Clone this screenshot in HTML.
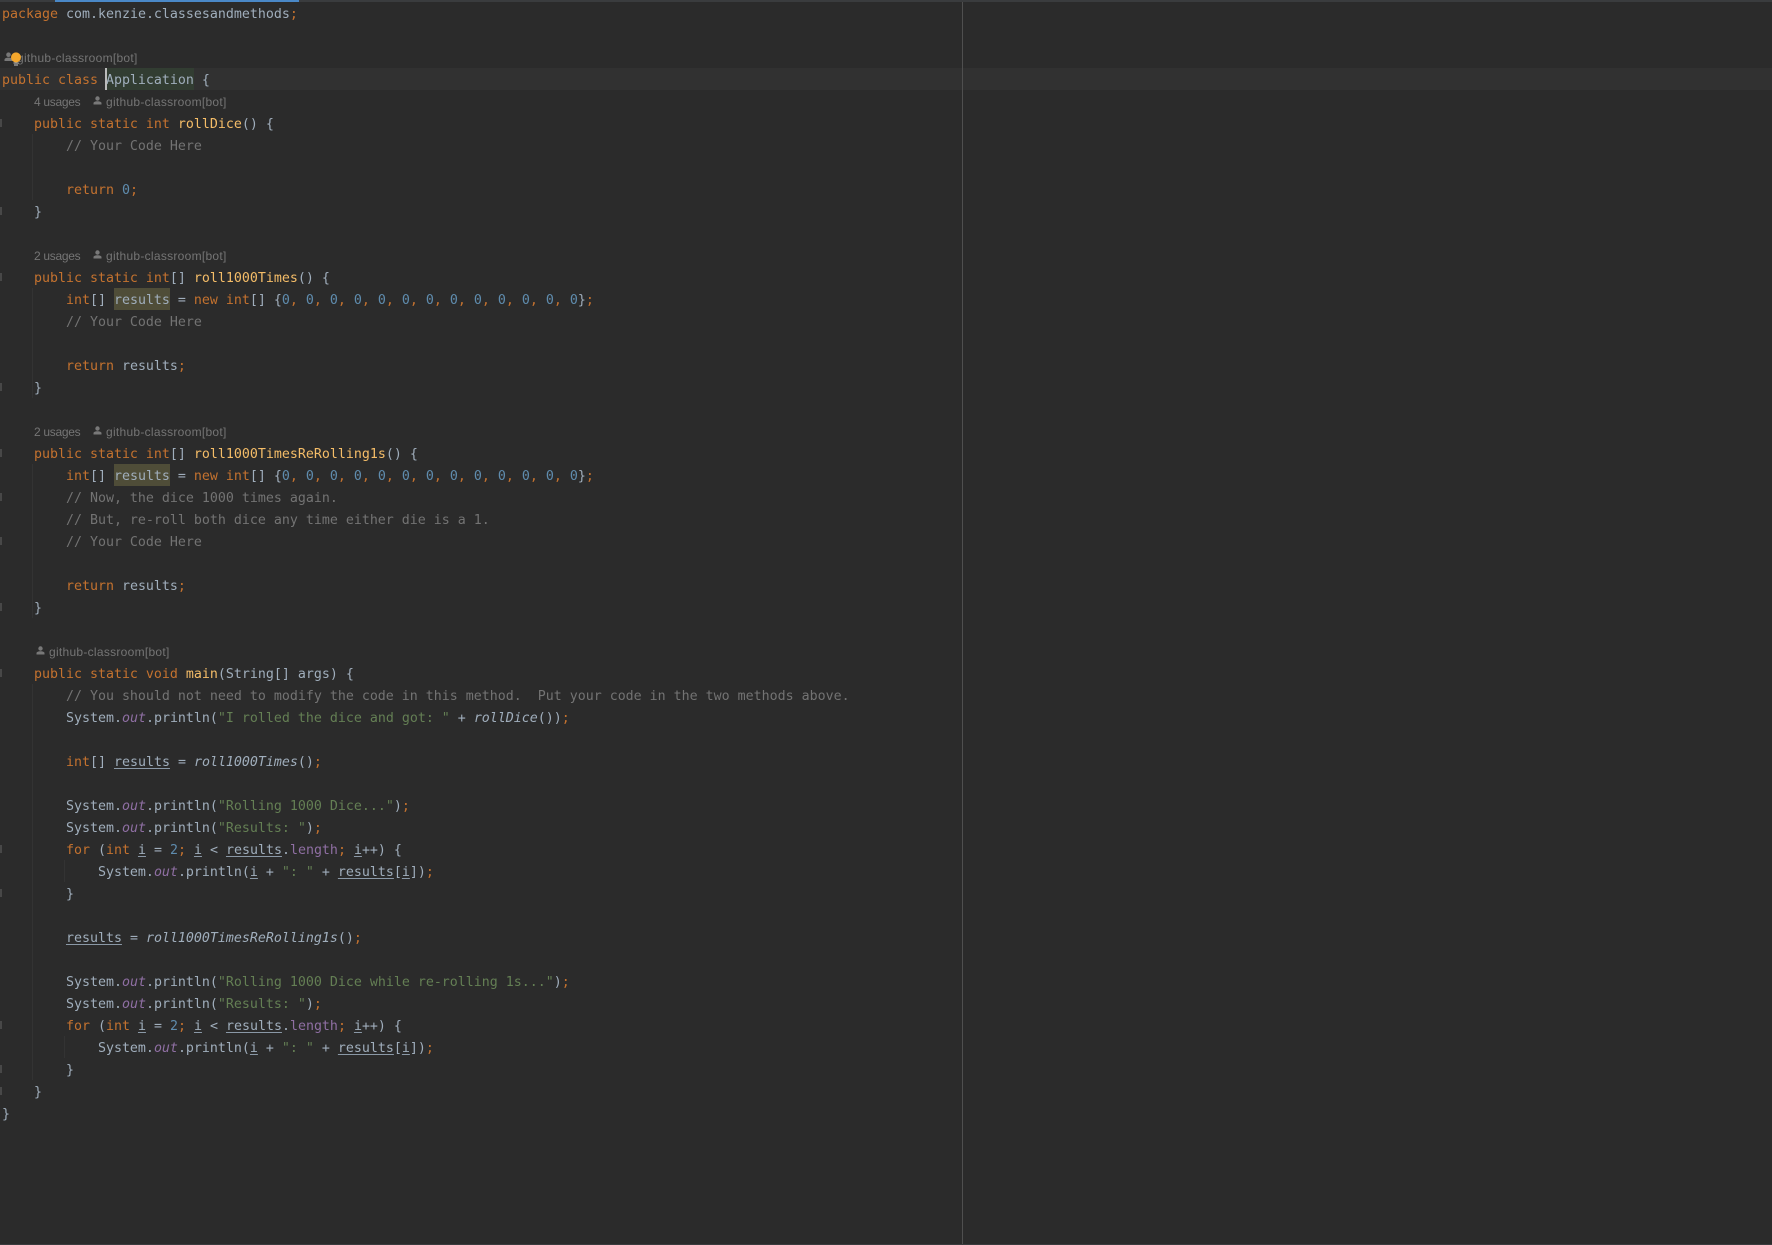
<!DOCTYPE html>
<html><head><meta charset="utf-8">
<style>
html,body{margin:0;padding:0;background:#2b2b2b;}
#p{position:relative;width:1772px;height:1245px;background:#2b2b2b;overflow:hidden;}
.a{position:absolute;}
.l{position:absolute;left:2px;margin-top:2px;height:22px;line-height:22px;white-space:pre;font-family:"DejaVu Sans Mono","Liberation Mono",monospace;font-size:13.29px;color:#a0aebc;}
.h{position:absolute;left:0;height:22px;line-height:22px;white-space:pre;font-family:"Liberation Sans",sans-serif;font-size:12px;color:#757575;}
.us{letter-spacing:-.3px}
.k{color:#c4722f}.m{color:#f5bd68}.c{color:#737373}.s{color:#647f54}.n{color:#5f8cae}.f{color:#8f6fa3}
.o{color:#8f6fa3;font-style:italic}.t{font-style:italic}
.u{text-decoration:underline;text-decoration-color:#8a98a6;text-decoration-thickness:1px;text-underline-offset:2px;text-decoration-skip-ink:none;}
.g{position:absolute;width:1px;background:#333333;}
.fd{position:absolute;left:0;width:2px;height:8px;background:#484848;}
</style></head><body><div id="p">
<div class="a" style="left:0;top:0;width:1772px;height:2px;background:#3a3c3e"></div>
<div class="a" style="left:55px;top:0;width:244px;height:2px;background:#4a88c7"></div>
<div class="a" style="left:0;top:68px;width:1772px;height:22px;background:#313131"></div>
<div class="a" style="left:106px;top:68px;width:88px;height:22px;background:#323d32"></div>
<div class="a" style="left:114px;top:288px;width:56px;height:22px;background:#4f4d38"></div>
<div class="a" style="left:114px;top:464px;width:56px;height:22px;background:#4f4d38"></div>
<div class="a" style="left:962px;top:2px;width:1px;height:1243px;background:#4f4f4f"></div>
<div class="a" style="left:0;top:1244px;width:1772px;height:1px;background:#3a3c3e"></div>

<div class="g" style="left:32px;top:134px;height:66px"></div>
<div class="g" style="left:32px;top:288px;height:110px"></div>
<div class="g" style="left:32px;top:464px;height:154px"></div>
<div class="g" style="left:32px;top:684px;height:396px"></div>
<div class="g" style="left:64px;top:860px;height:22px"></div>
<div class="g" style="left:64px;top:1036px;height:22px"></div>

<div class="fd" style="top:119px"></div><div class="fd" style="top:207px"></div>
<div class="fd" style="top:273px"></div><div class="fd" style="top:383px"></div>
<div class="fd" style="top:449px"></div><div class="fd" style="top:493px"></div><div class="fd" style="top:537px"></div><div class="fd" style="top:603px"></div>
<div class="fd" style="top:669px"></div><div class="fd" style="top:845px"></div><div class="fd" style="top:889px"></div>
<div class="fd" style="top:1021px"></div><div class="fd" style="top:1065px"></div><div class="fd" style="top:1087px"></div>

<div class="l" style="top:2px"><span class="k">package</span> com.kenzie.classesandmethods<span class="k">;</span></div>

<div class="h" style="top:47px;left:17px;letter-spacing:.28px">github-classroom[bot]</div>
<svg class="a" style="left:4px;top:52px" width="10" height="10" viewBox="0 0 10 10"><circle cx="4.5" cy="2.7" r="2.3" fill="#787878"/><path d="M0.5 9V7.6C0.5 6.2 2.5 5.6 4.5 5.6S8.5 6.2 8.5 7.6V9Z" fill="#787878"/></svg>
<svg class="a" style="left:10px;top:52px" width="12" height="16" viewBox="0 0 12 16"><circle cx="6" cy="5.4" r="5" fill="#f4a72c"/><rect x="3.5" y="10.5" width="5" height="1" fill="#c9c9c9"/><rect x="4" y="12.5" width="4" height="1" fill="#c9c9c9"/></svg>

<div class="l" style="top:68px"><span class="k">public class</span> Application {</div>
<div class="a" style="left:105px;top:68px;width:2px;height:22px;background:#bbbbbb"></div>

<div class="h us" style="top:91px;left:34px">4 usages</div>
<svg class="a" style="left:93px;top:96px" width="9" height="10" viewBox="0 0 9 10"><circle cx="4.5" cy="2.5" r="2.2" fill="#787878"/><path d="M0.5 8.5V7.2C0.5 5.9 2.5 5.3 4.5 5.3S8.5 5.9 8.5 7.2V8.5Z" fill="#787878"/></svg>
<div class="h" style="top:91px;left:106px;letter-spacing:.28px">github-classroom[bot]</div>

<div class="l" style="top:112px">    <span class="k">public static int</span> <span class="m">rollDice</span>() {</div>
<div class="l c" style="top:134px">        // Your Code Here</div>
<div class="l" style="top:178px">        <span class="k">return</span> <span class="n">0</span><span class="k">;</span></div>
<div class="l" style="top:200px">    }</div>

<div class="h us" style="top:245px;left:34px">2 usages</div>
<svg class="a" style="left:93px;top:250px" width="9" height="10" viewBox="0 0 9 10"><circle cx="4.5" cy="2.5" r="2.2" fill="#787878"/><path d="M0.5 8.5V7.2C0.5 5.9 2.5 5.3 4.5 5.3S8.5 5.9 8.5 7.2V8.5Z" fill="#787878"/></svg>
<div class="h" style="top:245px;left:106px;letter-spacing:.28px">github-classroom[bot]</div>

<div class="l" style="top:266px">    <span class="k">public static int</span>[] <span class="m">roll1000Times</span>() {</div>
<div class="l" style="top:288px">        <span class="k">int</span>[] results = <span class="k">new int</span>[] {<span class="n">0</span><span class="k">,</span> <span class="n">0</span><span class="k">,</span> <span class="n">0</span><span class="k">,</span> <span class="n">0</span><span class="k">,</span> <span class="n">0</span><span class="k">,</span> <span class="n">0</span><span class="k">,</span> <span class="n">0</span><span class="k">,</span> <span class="n">0</span><span class="k">,</span> <span class="n">0</span><span class="k">,</span> <span class="n">0</span><span class="k">,</span> <span class="n">0</span><span class="k">,</span> <span class="n">0</span><span class="k">,</span> <span class="n">0</span>}<span class="k">;</span></div>
<div class="l c" style="top:310px">        // Your Code Here</div>
<div class="l" style="top:354px">        <span class="k">return</span> results<span class="k">;</span></div>
<div class="l" style="top:376px">    }</div>

<div class="h us" style="top:421px;left:34px">2 usages</div>
<svg class="a" style="left:93px;top:426px" width="9" height="10" viewBox="0 0 9 10"><circle cx="4.5" cy="2.5" r="2.2" fill="#787878"/><path d="M0.5 8.5V7.2C0.5 5.9 2.5 5.3 4.5 5.3S8.5 5.9 8.5 7.2V8.5Z" fill="#787878"/></svg>
<div class="h" style="top:421px;left:106px;letter-spacing:.28px">github-classroom[bot]</div>

<div class="l" style="top:442px">    <span class="k">public static int</span>[] <span class="m">roll1000TimesReRolling1s</span>() {</div>
<div class="l" style="top:464px">        <span class="k">int</span>[] results = <span class="k">new int</span>[] {<span class="n">0</span><span class="k">,</span> <span class="n">0</span><span class="k">,</span> <span class="n">0</span><span class="k">,</span> <span class="n">0</span><span class="k">,</span> <span class="n">0</span><span class="k">,</span> <span class="n">0</span><span class="k">,</span> <span class="n">0</span><span class="k">,</span> <span class="n">0</span><span class="k">,</span> <span class="n">0</span><span class="k">,</span> <span class="n">0</span><span class="k">,</span> <span class="n">0</span><span class="k">,</span> <span class="n">0</span><span class="k">,</span> <span class="n">0</span>}<span class="k">;</span></div>
<div class="l c" style="top:486px">        // Now, the dice 1000 times again.</div>
<div class="l c" style="top:508px">        // But, re-roll both dice any time either die is a 1.</div>
<div class="l c" style="top:530px">        // Your Code Here</div>
<div class="l" style="top:574px">        <span class="k">return</span> results<span class="k">;</span></div>
<div class="l" style="top:596px">    }</div>

<svg class="a" style="left:36px;top:646px" width="9" height="10" viewBox="0 0 9 10"><circle cx="4.5" cy="2.5" r="2.2" fill="#787878"/><path d="M0.5 8.5V7.2C0.5 5.9 2.5 5.3 4.5 5.3S8.5 5.9 8.5 7.2V8.5Z" fill="#787878"/></svg>
<div class="h" style="top:641px;left:49px;letter-spacing:.28px">github-classroom[bot]</div>

<div class="l" style="top:662px">    <span class="k">public static void</span> <span class="m">main</span>(String[] args) {</div>
<div class="l c" style="top:684px">        // You should not need to modify the code in this method.  Put your code in the two methods above.</div>
<div class="l" style="top:706px">        System.<span class="o">out</span>.println(<span class="s">"I rolled the dice and got: "</span> + <span class="t">rollDice</span>())<span class="k">;</span></div>
<div class="l" style="top:750px">        <span class="k">int</span>[] <span class="u">results</span> = <span class="t">roll1000Times</span>()<span class="k">;</span></div>
<div class="l" style="top:794px">        System.<span class="o">out</span>.println(<span class="s">"Rolling 1000 Dice..."</span>)<span class="k">;</span></div>
<div class="l" style="top:816px">        System.<span class="o">out</span>.println(<span class="s">"Results: "</span>)<span class="k">;</span></div>
<div class="l" style="top:838px">        <span class="k">for</span> (<span class="k">int</span> <span class="u">i</span> = <span class="n">2</span><span class="k">;</span> <span class="u">i</span> &lt; <span class="u">results</span>.<span class="f">length</span><span class="k">;</span> <span class="u">i</span>++) {</div>
<div class="l" style="top:860px">            System.<span class="o">out</span>.println(<span class="u">i</span> + <span class="s">": "</span> + <span class="u">results</span>[<span class="u">i</span>])<span class="k">;</span></div>
<div class="l" style="top:882px">        }</div>
<div class="l" style="top:926px">        <span class="u">results</span> = <span class="t">roll1000TimesReRolling1s</span>()<span class="k">;</span></div>
<div class="l" style="top:970px">        System.<span class="o">out</span>.println(<span class="s">"Rolling 1000 Dice while re-rolling 1s..."</span>)<span class="k">;</span></div>
<div class="l" style="top:992px">        System.<span class="o">out</span>.println(<span class="s">"Results: "</span>)<span class="k">;</span></div>
<div class="l" style="top:1014px">        <span class="k">for</span> (<span class="k">int</span> <span class="u">i</span> = <span class="n">2</span><span class="k">;</span> <span class="u">i</span> &lt; <span class="u">results</span>.<span class="f">length</span><span class="k">;</span> <span class="u">i</span>++) {</div>
<div class="l" style="top:1036px">            System.<span class="o">out</span>.println(<span class="u">i</span> + <span class="s">": "</span> + <span class="u">results</span>[<span class="u">i</span>])<span class="k">;</span></div>
<div class="l" style="top:1058px">        }</div>
<div class="l" style="top:1080px">    }</div>
<div class="l" style="top:1102px">}</div>
</div></body></html>
